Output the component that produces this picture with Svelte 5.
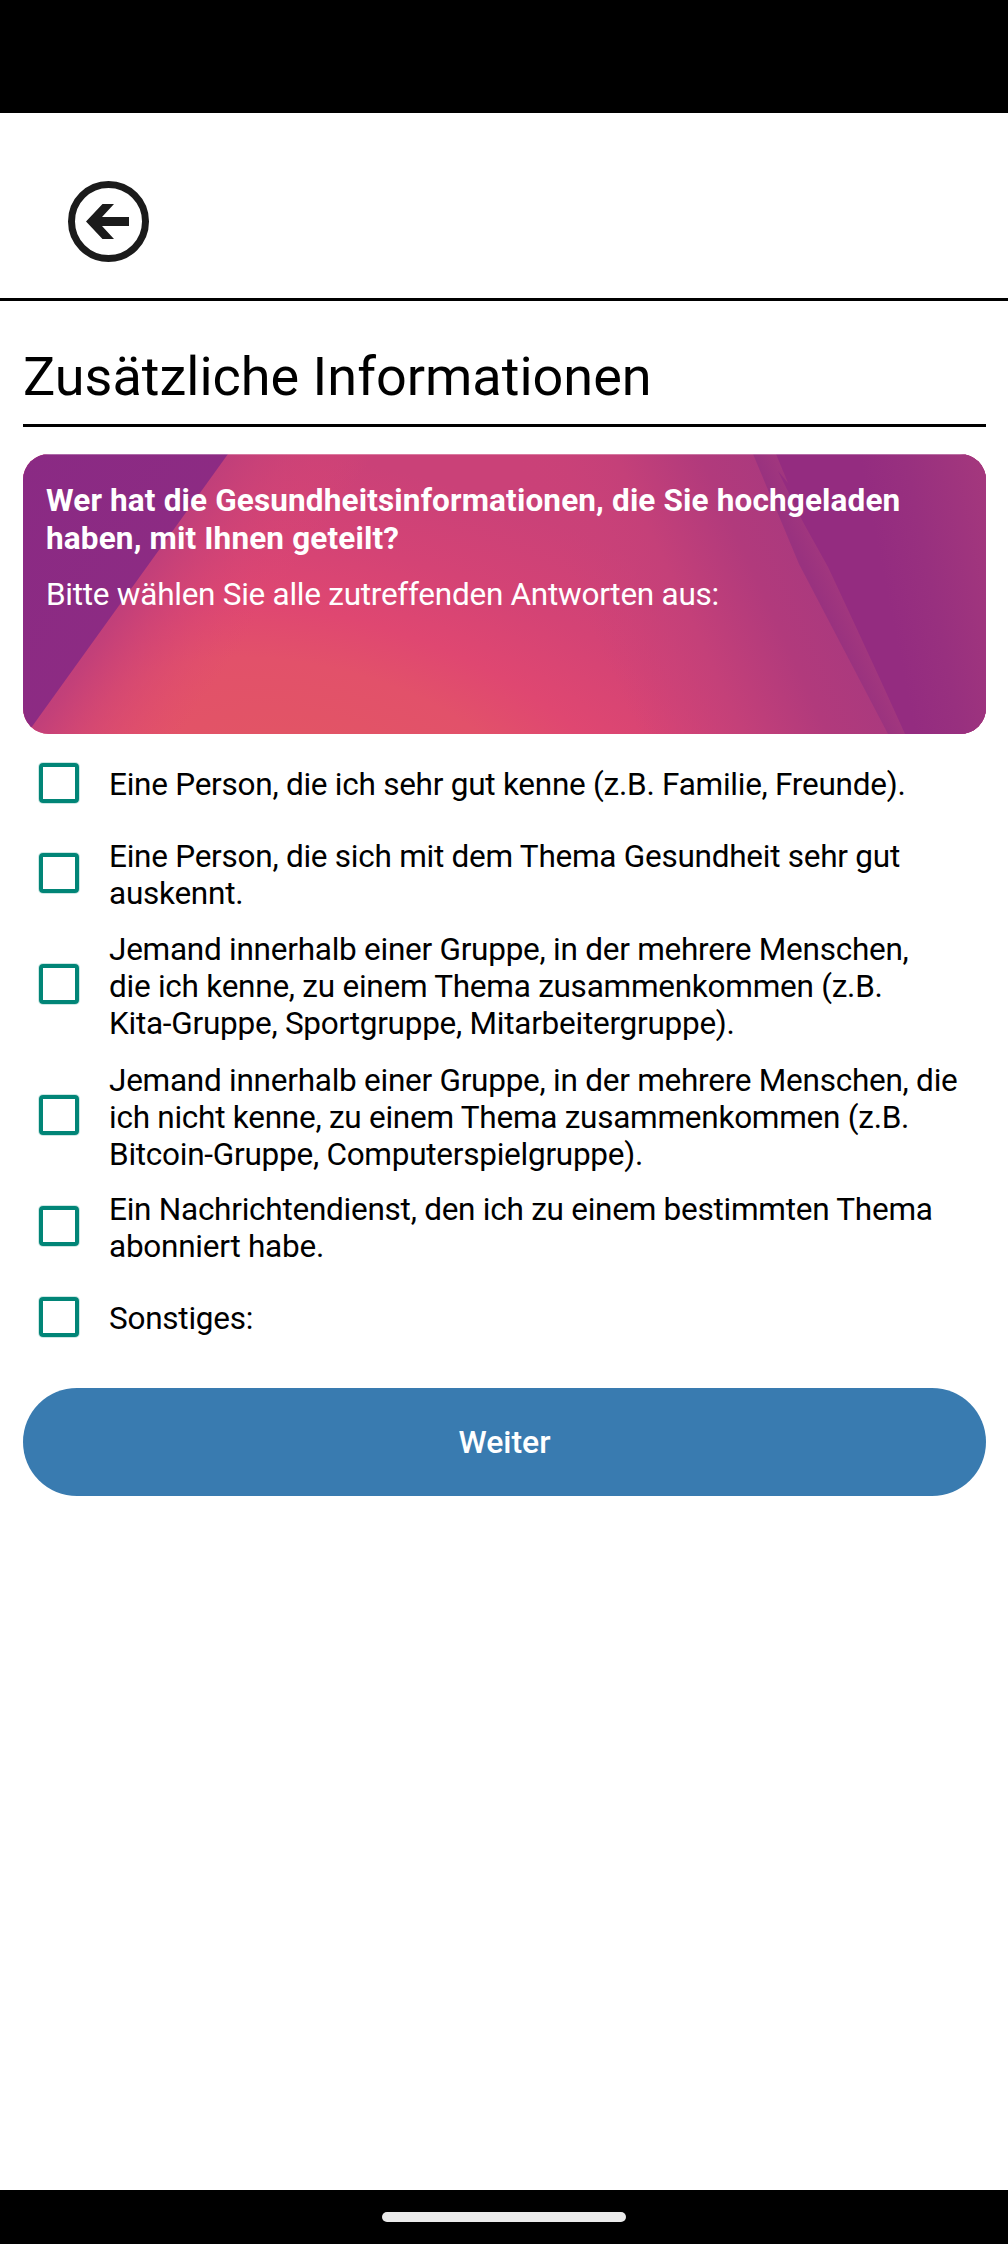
<script>
  let options = $state([
    { text: 'Eine Person, die ich sehr gut kenne (z.B. Familie, Freunde).', checked: false },
    { text: 'Eine Person, die sich mit dem Thema Gesundheit sehr gut\nauskennt.', checked: false },
    { text: 'Jemand innerhalb einer Gruppe, in der mehrere Menschen,\ndie ich kenne, zu einem Thema zusammenkommen (z.B.\nKita-Gruppe, Sportgruppe, Mitarbeitergruppe).', checked: false },
    { text: 'Jemand innerhalb einer Gruppe, in der mehrere Menschen, die\nich nicht kenne, zu einem Thema zusammenkommen (z.B.\nBitcoin-Gruppe, Computerspielgruppe).', checked: false },
    { text: 'Ein Nachrichtendienst, den ich zu einem bestimmten Thema\nabonniert habe.', checked: false },
    { text: 'Sonstiges:', checked: false }
  ]);
</script>

<div class="screen">
  <div class="status"></div>
  <header>
    <button class="back" aria-label="Zurück">
      <svg width="81" height="81" viewBox="0 0 81 81">
        <circle cx="40.5" cy="40.5" r="37" fill="none" stroke="#1b1b1b" stroke-width="7" />
        <path d="M18 40.5 34.5 23H46L34 36H61V45H34L46 58H34.5Z" fill="#1b1b1b" />
      </svg>
    </button>
  </header>

  <main>
    <h1>Zusätzliche Informationen</h1>

    <section class="card">
      <svg class="backdrop" viewBox="0 0 963 280" preserveAspectRatio="none" aria-hidden="true">
        <defs>
          <radialGradient id="glow" gradientUnits="userSpaceOnUse" cx="0" cy="0" r="1" gradientTransform="translate(290 330) rotate(14) scale(640 325)">
            <stop offset="0" stop-color="#e25663" />
            <stop offset="0.36" stop-color="#e2516a" />
            <stop offset="0.52" stop-color="#df4771" />
            <stop offset="0.74" stop-color="#d44375" />
            <stop offset="1" stop-color="#ca4178" />
          </radialGradient>
          <linearGradient id="edge" gradientUnits="userSpaceOnUse" x1="108" y1="140" x2="206" y2="209">
            <stop offset="0" stop-color="#c03f7a" stop-opacity="0.95" />
            <stop offset="1" stop-color="#df4872" stop-opacity="0" />
          </linearGradient>
          <linearGradient id="fade" gradientUnits="userSpaceOnUse" x1="560" y1="210" x2="812" y2="95">
            <stop offset="0.08" stop-color="#cb4278" stop-opacity="0" />
            <stop offset="0.42" stop-color="#c44079" />
            <stop offset="0.7" stop-color="#b13a7c" />
            <stop offset="1" stop-color="#a8397f" />
          </linearGradient>
          <linearGradient id="band" gradientUnits="userSpaceOnUse" x1="796" y1="144" x2="822" y2="132">
            <stop offset="0" stop-color="#99327f" />
            <stop offset="1" stop-color="#a4387e" />
          </linearGradient>
          <linearGradient id="right" gradientUnits="userSpaceOnUse" x1="840" y1="20" x2="965" y2="-5">
            <stop offset="0" stop-color="#942c80" />
            <stop offset="0.35" stop-color="#98307f" />
            <stop offset="1" stop-color="#a5387d" />
          </linearGradient>
          <linearGradient id="left" x1="0" y1="0" x2="1" y2="1">
            <stop offset="0" stop-color="#8a2a84" />
            <stop offset="1" stop-color="#8f2c82" />
          </linearGradient>
        </defs>
        <rect width="963" height="280" fill="url(#glow)" />
        <rect width="963" height="280" fill="url(#edge)" />
        <rect width="963" height="280" fill="url(#fade)" />
        <path d="M730 0H963V280H865L776 110Z" fill="url(#band)" />
        <path d="M753 0H963V280H882Q850 209 805 113L780 68 755 17 765 29Z" fill="url(#right)" />
        <path d="M0 0H205L8 274 0 280Z" fill="url(#left)" />
        <rect width="963" height="1" fill="#ffffff" opacity="0.3" />
      </svg>
      <h2>Wer hat die Gesundheitsinformationen, die Sie hochgeladen<br />haben, mit Ihnen geteilt?</h2>
      <p>Bitte wählen Sie alle zutreffenden Antworten aus:</p>
    </section>

    <div class="options">
      {#each options as option}
        <label>
          <input type="checkbox" bind:checked={option.checked} />
          <span>{option.text}</span>
        </label>
      {/each}
    </div>

    <button class="next">Weiter</button>
  </main>

  <footer><div class="pill"></div></footer>
</div>

<style>
  :global(body) {
    margin: 0;
    background: #fff;
  }
  .screen {
    width: 1008px;
    height: 2244px;
    display: flex;
    flex-direction: column;
    background: #fff;
    color: #000;
    font-family: Roboto, 'Liberation Sans', sans-serif;
  }
  .status {
    height: 113px;
    background: #000;
  }
  header {
    box-sizing: border-box;
    height: 188px;
    padding: 68px 0 0 68px;
    border-bottom: 3px solid #000;
  }
  button {
    border: 0;
    font-family: inherit;
  }
  .back {
    display: block;
    padding: 0;
    background: none;
  }
  .back svg {
    display: block;
  }
  main {
    flex: 1;
    padding: 0 22px 0 23px;
  }
  h1 {
    box-sizing: border-box;
    height: 126px;
    margin: 0 0 27px;
    padding-top: 44px;
    border-bottom: 3px solid #000;
    font-size: 54px;
    font-weight: 400;
    line-height: 63px;
    white-space: nowrap;
  }
  .card {
    position: relative;
    box-sizing: border-box;
    height: 280px;
    padding: 28px 23px 0;
    border-radius: 26px;
    overflow: hidden;
    color: #fff;
  }
  .backdrop {
    position: absolute;
    inset: 0;
    width: 100%;
    height: 100%;
  }
  h2,
  p {
    position: relative;
    margin: 0;
    font-size: 31.5px;
    line-height: 38px;
    white-space: nowrap;
  }
  h2 {
    letter-spacing: 0.15px;
  }
  p {
    margin-top: 18px;
    letter-spacing: -0.26px;
  }
  .options {
    padding-top: 4px;
  }
  label {
    box-sizing: border-box;
    min-height: 90px;
    padding: 6px 0 7px 16px;
    display: flex;
    align-items: center;
    gap: 30px;
  }
  label:nth-child(3),
  label:nth-child(4) {
    min-height: 131px;
  }
  input {
    appearance: none;
    box-sizing: border-box;
    flex: none;
    width: 40px;
    height: 40px;
    margin: 0;
    border: 4px solid #018577;
    border-radius: 4px;
    box-shadow: 0 0 0 1px rgb(1 133 119 / 0.2);
  }
  label span {
    padding-top: 4px;
    font-size: 31.5px;
    letter-spacing: -0.25px;
    line-height: 37px;
    white-space: pre;
  }
  .next {
    display: block;
    width: 100%;
    height: 108px;
    margin-top: 26px;
    border-radius: 54px;
    background: #397bb0;
    color: #fff;
    font-size: 32px;
    font-weight: 500;
  }
  footer {
    height: 54px;
    display: flex;
    justify-content: center;
    align-items: flex-start;
    background: #000;
  }
  .pill {
    width: 244px;
    height: 10px;
    margin-top: 22px;
    border-radius: 5px;
    background: #ebebeb;
  }
</style>
